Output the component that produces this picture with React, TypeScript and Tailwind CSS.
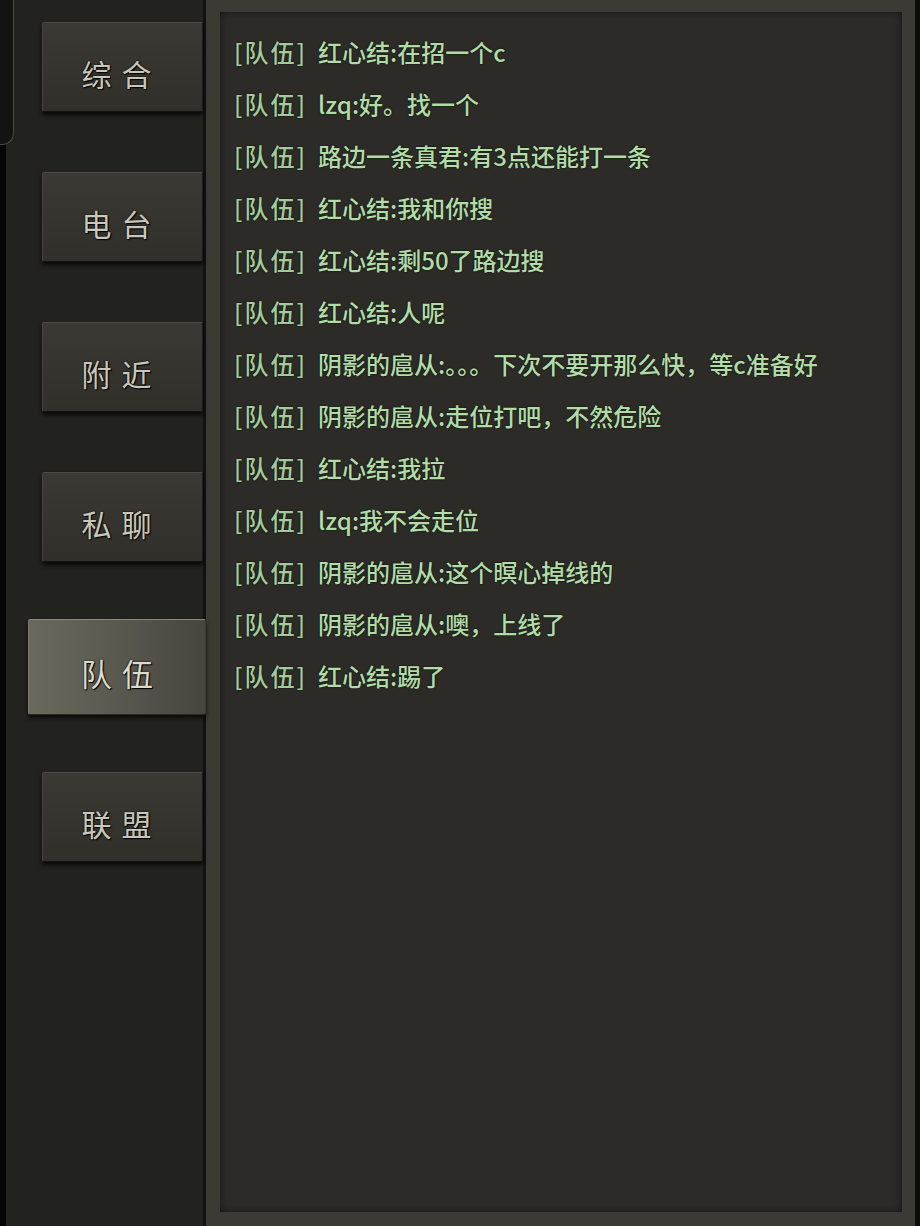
const tabs = [
  { label: "综合", active: false },
  { label: "电台", active: false },
  { label: "附近", active: false },
  { label: "私聊", active: false },
  { label: "队伍", active: true },
  { label: "联盟", active: false },
];

const messages = [
  ["红心结", "在招一个c"],
  ["lzq", "好。找一个"],
  ["路边一条真君", "有3点还能打一条"],
  ["红心结", "我和你搜"],
  ["红心结", "剩50了路边搜"],
  ["红心结", "人呢"],
  ["阴影的扈从", "。。。下次不要开那么快，等c准备好"],
  ["阴影的扈从", "走位打吧，不然危险"],
  ["红心结", "我拉"],
  ["lzq", "我不会走位"],
  ["阴影的扈从", "这个暝心掉线的"],
  ["阴影的扈从", "噢，上线了"],
  ["红心结", "踢了"],
];

const font = { fontFamily: '"Noto Sans CJK SC", "Noto Sans", sans-serif' };

function TabButton({ label, active }: { label: string; active: boolean }) {
  if (active) {
    return (
      <div className="relative z-10 -my-[3px] ml-[28px] flex h-[96px] w-[178px] items-center justify-center rounded-[2px] border border-t-[#8a897c] border-l-[#77766a] border-r-[#3a3933] border-b-[#2a2925] bg-gradient-to-r from-[#6a695d] via-[#5a5950] to-[#46453e] pt-[12px] shadow-[0_3px_4px_rgba(0,0,0,0.7)]">
        <span className="pl-[10px] text-[31px] tracking-[10px] text-[#dcdbd0] [text-shadow:0_0_2px_#000,1px_1px_1px_#000]">
          {label}
        </span>
      </div>
    );
  }
  return (
    <div className="ml-[42px] flex h-[90px] w-[161px] items-center justify-center rounded-[2px] border border-t-[#4a4943] border-l-[#46453f] border-r-[#1a1a17] border-b-[#121210] bg-gradient-to-b from-[#3a3933] to-[#302f2a] pt-[12px] shadow-[0_3px_4px_rgba(0,0,0,0.8)]">
      <span className="pr-[2px] text-[30px] tracking-[10px] text-[#c9c7b9] [text-shadow:0_0_2px_#000,1px_1px_1px_#000]">
        {label}
      </span>
    </div>
  );
}

export default function App() {
  return (
    <div className="flex h-[1226px] w-[920px] overflow-hidden bg-black" style={font}>
      {/* Sidebar */}
      <div className="relative flex h-full w-[206px] shrink-0 flex-col gap-[60px] border-r-[3px] border-[#121210] bg-[#22221e] pt-[22px] pl-[6px] shadow-[inset_6px_0_0_#050505]">
        <div className="pointer-events-none absolute left-0 top-0 h-[145px] w-[14px] rounded-br-[12px] border-r border-b border-[#4a4a40] bg-[#131311]" />
        {tabs.map((t) => (
          <div key={t.label} className="-ml-[6px]">
            <TabButton label={t.label} active={t.active} />
          </div>
        ))}
      </div>

      {/* Chat frame */}
      <div className="flex h-full flex-1 bg-[#3b3a34] pt-[12px] pb-[14px] pl-[14px] pr-[18px] shadow-[inset_-5px_0_0_#0c0c0b]">
        <div className="flex h-full flex-1 flex-col bg-[#2c2b27] pt-[14px] pl-[14px] shadow-[inset_0_0_8px_rgba(0,0,0,0.5)]">
          {messages.map(([name, text], i) => (
            <div key={i} className="flex h-[52px] items-center whitespace-nowrap text-[24px] leading-none font-medium text-[#b0dca7] [text-shadow:0_0_2px_rgba(0,0,0,0.8)]">
              <span className="mr-[11px] tracking-[2px] text-[#a3cc9c]">[队伍]</span>
              <span>
                {name}:{text}
              </span>
            </div>
          ))}
        </div>
      </div>
    </div>
  );
}
